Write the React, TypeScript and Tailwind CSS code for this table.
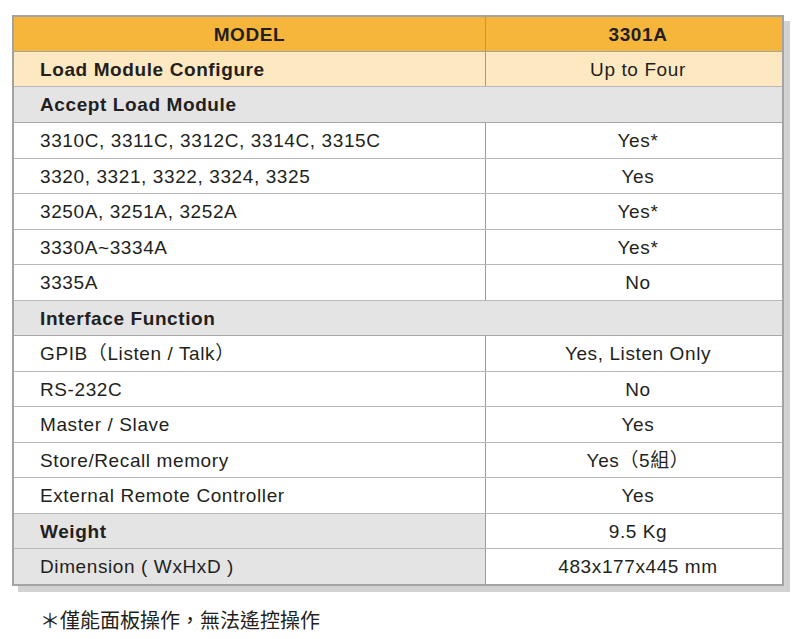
import React from "react";

type Row =
  | { kind: "section"; label: string; h: string }
  | { kind: "row"; label: string; value: string; h: string; left?: string; right?: string; bold?: boolean };

const rows: Row[] = [
  { kind: "row", label: "Load Module Configure", value: "Up to Four", h: "h-[35px]", left: "bg-[#fde9c1]", right: "bg-[#fde9c1]", bold: true },
  { kind: "section", label: "Accept Load Module", h: "h-[36px]" },
  { kind: "row", label: "3310C, 3311C, 3312C, 3314C, 3315C", value: "Yes*", h: "h-[36px]" },
  { kind: "row", label: "3320, 3321, 3322, 3324, 3325", value: "Yes", h: "h-[35px]" },
  { kind: "row", label: "3250A, 3251A, 3252A", value: "Yes*", h: "h-[36px]" },
  { kind: "row", label: "3330A~3334A", value: "Yes*", h: "h-[35px]" },
  { kind: "row", label: "3335A", value: "No", h: "h-[36px]" },
  { kind: "section", label: "Interface Function", h: "h-[35px]" },
  { kind: "row", label: "GPIB\uFF08Listen / Talk\uFF09", value: "Yes, Listen Only", h: "h-[36px]" },
  { kind: "row", label: "RS-232C", value: "No", h: "h-[35px]" },
  { kind: "row", label: "Master / Slave", value: "Yes", h: "h-[36px]" },
  { kind: "row", label: "Store/Recall memory", value: "Yes\uFF085組\uFF09", h: "h-[35px]" },
  { kind: "row", label: "External Remote Controller", value: "Yes", h: "h-[36px]" },
  { kind: "row", label: "Weight", value: "9.5 Kg", h: "h-[35px]", left: "bg-[#e4e4e4]", bold: true },
  { kind: "row", label: "Dimension ( WxHxD )", value: "483x177x445 mm", h: "h-[35px]", left: "bg-[#e4e4e4]" },
];

export default function App() {
  return (
    <div
      className="w-[800px] h-[639px] bg-white text-[#231f20]"
      style={{ fontFamily: '"Liberation Sans", Arial, "Noto Sans CJK TC", sans-serif' }}
    >
      <div className="pt-[15px] pl-[12px]">
        <div className="w-[772px] border-2 border-[#a3a3a3] shadow-[6px_6px_0_#d2d2d2] text-[19px] tracking-[0.6px]">
          <div className="grid grid-cols-[472px_1fr] h-[35px] bg-[#f6b63c] border-b border-[#a3a3a3] font-bold">
            <div className="flex items-center justify-center pt-[2px] border-r border-[#9a9a9a]">MODEL</div>
            <div className="flex items-center justify-center pt-[2px] pl-[8px]">3301A</div>
          </div>
          {rows.map((r, i) => {
            const last = i === rows.length - 1;
            if (r.kind === "section") {
              return (
                <div
                  key={i}
                  className={`${r.h} flex items-center pl-[26px] pt-[2px] bg-[#e4e4e4] font-bold border-b border-[#a8a8a8]`}
                >
                  {r.label}
                </div>
              );
            }
            return (
              <div
                key={i}
                className={`grid grid-cols-[472px_1fr] ${r.h} ${last ? "" : "border-b border-[#b8b8b8]"}`}
              >
                <div
                  className={`flex items-center pl-[26px] pt-[2px] border-r border-[#9a9a9a] ${r.left ?? "bg-white"} ${r.bold ? "font-bold" : ""}`}
                >
                  {r.label}
                </div>
                <div className={`flex items-center justify-center pt-[2px] pl-[8px] ${r.right ?? "bg-white"}`}>{r.value}</div>
              </div>
            );
          })}
        </div>
      </div>
      <div
        className="mt-[22px] pl-[40px] text-[20px] leading-[24px]"
        style={{ fontFamily: '"Noto Sans CJK TC", "Noto Sans CJK SC", sans-serif' }}
      >
        ＊僅能面板操作，無法遙控操作
      </div>
    </div>
  );
}
